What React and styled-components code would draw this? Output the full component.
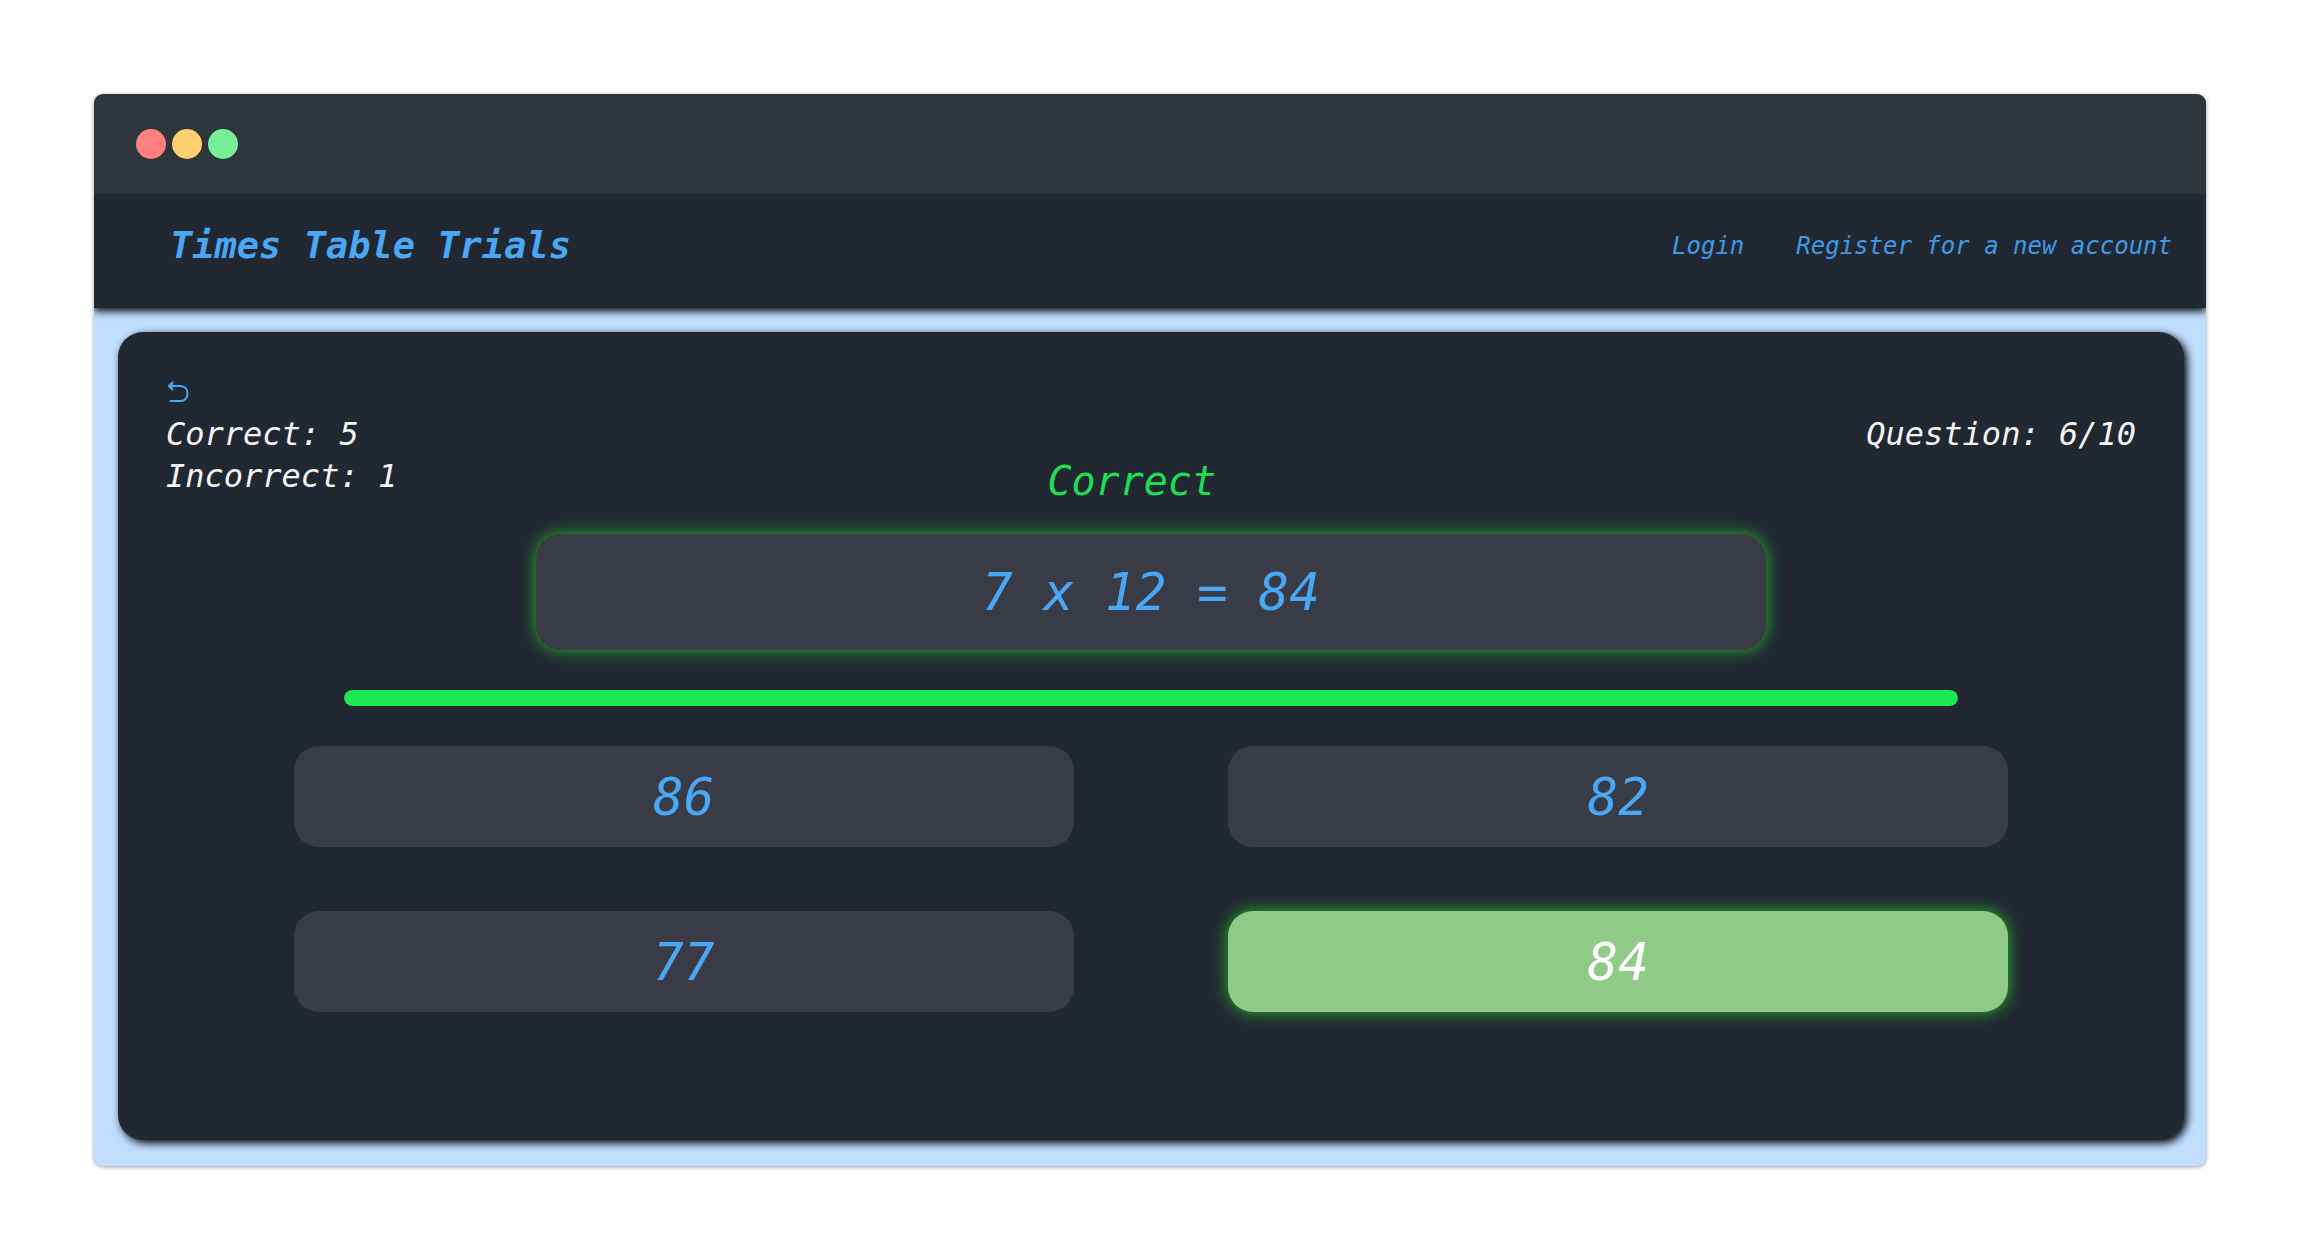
import React from "react";
import styled, { createGlobalStyle, css } from "styled-components";

const GlobalStyle = createGlobalStyle`
  *, *::before, *::after { box-sizing: border-box; }
  body {
    margin: 0;
    background: #ffffff;
    font-family: "DejaVu Sans Mono", "Liberation Mono", monospace;
    font-style: italic;
  }
  button { font: inherit; }
`;

const Page = styled.div`
  display: flex;
  min-height: 100vh;
  padding: 94px;
`;

const Window = styled.div`
  display: flex;
  flex: 1;
  flex-direction: column;
  overflow: hidden;
  border-radius: 9px;
  background: #c1deff;
  box-shadow: 0 1px 4px rgba(0, 0, 0, 0.4);
`;

const TitleBar = styled.div`
  display: flex;
  flex: none;
  align-items: center;
  gap: 6px;
  height: 100px;
  padding: 0 42px;
  background: #2e363b;
  z-index: 1;
`;

const Dot = styled.span`
  width: 30px;
  height: 30px;
  border-radius: 50%;
  background: ${(p) => p.$color};
`;

const Header = styled.header`
  display: flex;
  flex: none;
  align-items: center;
  justify-content: space-between;
  padding: 25px 34px 35px 76px;
  background: #212832;
  box-shadow: 0 3px 8px #000000;
`;

const Brand = styled.h1`
  margin: 0;
  color: #4aa7f3;
  font-size: 37px;
  font-weight: 700;
  line-height: 54px;
`;

const Nav = styled.nav`
  display: flex;
  gap: 52px;
`;

const NavLink = styled.a`
  color: #409ae6;
  font-size: 24px;
  line-height: 32px;
  text-decoration: none;
`;

const Main = styled.main`
  display: flex;
  flex: 1;
  padding: 24px 22px 26px 24px;
`;

const Card = styled.section`
  display: flex;
  flex: 1;
  flex-direction: column;
  align-items: center;
  border-radius: 25px;
  background: #212832;
  box-shadow: 3px 3px 8px #000000;
`;

const Status = styled.div`
  display: flex;
  justify-content: space-between;
  width: 100%;
  padding: 39px 48px 37px;
  color: #f5f5f5;
  font-size: 32px;
  line-height: 42px;
`;

const Score = styled.div`
  display: flex;
  flex-direction: column;
  align-items: flex-start;
`;

const BackButton = styled.button`
  display: flex;
  align-items: center;
  height: 42px;
  padding: 0;
  border: 0;
  background: none;
  color: #4aa7f3;
  cursor: pointer;
`;

const Feedback = styled.p`
  align-self: flex-end;
  margin: 0;
  color: #1edf53;
  font-size: 40px;
  line-height: 32px;
`;

const QuestionCount = styled.span`
  padding-top: 42px;
`;

const tile = css`
  border: 0;
  border-radius: 25px;
  font-size: 51px;
  text-align: center;
  background: ${(p) => (p.$picked ? "#8fca86" : "#393c46")};
  color: ${(p) => (p.$picked ? "#ffffff" : "#4aa7f3")};
`;

const glow = css`
  box-shadow: 0 0 16px #2cb42c;
`;

const Equation = styled.h2`
  ${tile}
  ${glow}
  width: 59.5%;
  margin: 0 0 40px;
  padding: 29px 0 27px;
  font-weight: 400;
  line-height: 60px;
`;

const Timer = styled.progress`
  appearance: none;
  display: block;
  width: 78.1%;
  height: 16px;
  margin-bottom: 40px;
  overflow: hidden;
  border: 0;
  border-radius: 8px;
  background: #393c46;
  &::-webkit-progress-bar { background: #393c46; }
  &::-webkit-progress-value { border-radius: 8px; background: #1ee755; }
`;

const Answers = styled.div`
  display: grid;
  grid-template-columns: 1fr 1fr;
  gap: 64px 154px;
  width: 83%;
  margin-bottom: 40px;
`;

const Answer = styled.button`
  ${tile}
  ${(p) => p.$picked && glow}
  padding: 22px 0 19px;
  line-height: 60px;
  cursor: pointer;
`;

const BackIcon = () => (
  <svg width="24" height="24" viewBox="0 0 24 24" fill="none" aria-hidden="true">
    <path d="M4 6H14.5C19 6 21.5 9.500 21.500 13.500S19 21 14.500 21H4.500" stroke="currentColor" strokeWidth="2" strokeLinecap="round" />
    <path d="M6.500 2.500L3 6L6.500 9.500" fill="currentColor" stroke="currentColor" strokeWidth="2" strokeLinecap="round" strokeLinejoin="round" />
  </svg>
);

const options = [86, 82, 77, 84];
const picked = 84;

export default function App() {
  return (
    <>
      <GlobalStyle />
      <Page>
        <Window>
          <TitleBar>
            <Dot $color="#ff8080" />
            <Dot $color="#ffcf70" />
            <Dot $color="#76f096" />
          </TitleBar>
          <Header>
            <Brand>Times Table Trials</Brand>
            <Nav>
              <NavLink href="#login">Login</NavLink>
              <NavLink href="#register">Register for a new account</NavLink>
            </Nav>
          </Header>
          <Main>
            <Card>
              <Status>
                <Score>
                  <BackButton type="button" aria-label="Back"><BackIcon /></BackButton>
                  <span>Correct: 5</span>
                  <span>Incorrect: 1</span>
                </Score>
                <Feedback>Correct</Feedback>
                <QuestionCount>Question: 6/10</QuestionCount>
              </Status>
              <Equation>7 x 12 = 84</Equation>
              <Timer value={100} max={100} aria-label="Time left" />
              <Answers>
                {options.map((n) => (
                  <Answer key={n} type="button" $picked={n === picked}>{n}</Answer>
                ))}
              </Answers>
            </Card>
          </Main>
        </Window>
      </Page>
    </>
  );
}
